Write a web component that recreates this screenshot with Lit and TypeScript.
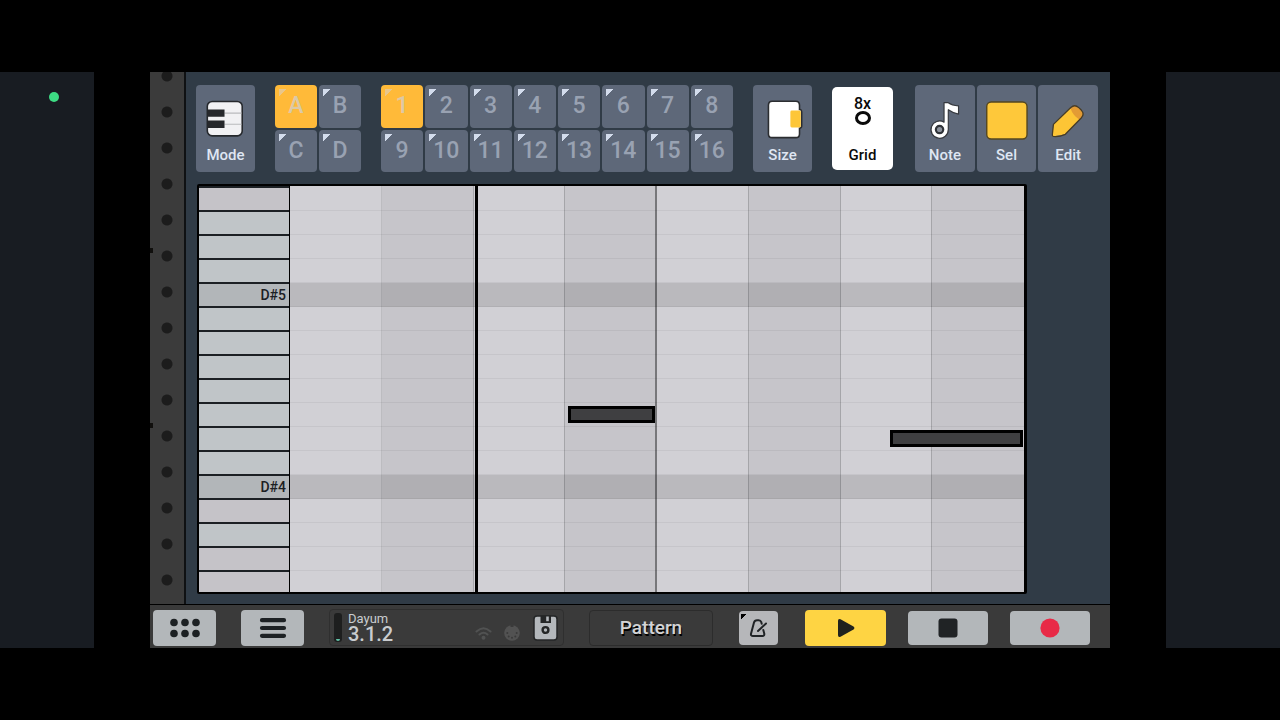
import { LitElement, html, css, svg } from "lit";
import { customElement, state } from "lit/decorators.js";
import { classMap } from "lit/directives/class-map.js";

const BANKS = ["A", "B", "C", "D"];
const PATTERNS = Array.from({ length: 16 }, (_, i) => i + 1);

type Key = { label?: string; warm?: boolean };
const KEYS: Key[] = [
  { warm: true }, {}, {}, {}, { label: "D#5" }, {}, {}, {}, {}, {}, {}, {},
  { label: "D#4" }, { warm: true }, {}, { warm: true }, { warm: true },
];

const LANE = 24;
const NOTES = [
  { start: 37.9, length: 11.8, lane: 9 },
  { start: 81.8, length: 18.1, lane: 10 },
];

const icons = {
  mode: svg`
    <rect x="11.5" y="4.5" width="35.5" height="35" rx="5" fill="#f1f1f3" stroke="#25282c" stroke-width="1.6"/>
    <path d="M29 16.4H46.2M29 27.7H46.2" stroke="#b9babd" stroke-width="1.2"/>
    <path d="M12 12.7H29V20H12ZM12 24H29V31.4H12Z" fill="#26282b"/>`,
  size: svg`
    <path d="M19.5 4.3H43.5Q47.3 4.3 47.3 8.5V12.8H48Q49.5 13.2 49.5 15V29.5Q49.5 31.5 47.3 31.8V37.5Q47.3 41.3 43.5 41.3H19.5Q15.7 41.3 15.7 37.5V8.5Q15.7 4.3 19.5 4.3Z" fill="#fff" stroke="#2b2d30" stroke-width="1.6"/>
    <rect x="38" y="13.7" width="10.6" height="17.3" rx="1.5" fill="#fdc638"/>`,
  note: svg`
    <path d="M29.2 5.7H33.5Q37 8.2 43.8 9V17.3Q38 16 33.5 12.8V32.7A8.7 8.7 0 1 1 29.2 25.3Z" fill="#fff" stroke="#36393f" stroke-width="1.2" stroke-linejoin="round"/>
    <circle cx="24.7" cy="32.7" r="3.7" fill="#8b919b" stroke="#303338" stroke-width="2.2"/>`,
  select: svg`<rect x="9.8" y="5" width="40.500" height="37.2" rx="4.5" fill="#fec83a" stroke="#54461f" stroke-width="1.4"/>`,
  edit: svg`
    <path d="M15.5 27.5L33 10.5Q37 7 41 10.7L43.7 13.4Q47 17 43.7 20.8L27.5 37.500L14.6 39.6Z" fill="#fdc535"/>
    <path d="M32.500 11L33 10.5Q37 7 41 10.7L43.7 13.4Q47 17 43.7 20.8L41.8 22.8Q35 18.5 32.5 11Z" fill="#e39b34"/>
    <path d="M15.5 27.5L33 10.5Q37 7 41 10.7L43.7 13.4Q47 17 43.7 20.8L27.5 37.5Q21 40.400 15.5 39.7Q14.2 39.4 14.4 38Z" fill="none" stroke="#463c28" stroke-width="1.3" stroke-linejoin="round"/>`,
};

@customElement("app-root")
export class AppRoot extends LitElement {
  @state() private bank = "A";
  @state() private pattern = 1;

  static styles = css`
    :host {
      display: block;
      font-family: Roboto, "Liberation Sans", sans-serif;
      color: #dfe6f3;
    }
    * { box-sizing: border-box; }
    button {
      font: inherit;
      color: inherit;
      border: 0;
      margin: 0;
      padding: 0;
      cursor: pointer;
    }
    svg { display: block; }

    .screen {
      min-height: 100vh;
      display: grid;
      grid-template-columns: minmax(0, 94fr) minmax(0, 960fr) minmax(0, 114fr);
      gap: 56px;
      padding: 72px 0;
      background: #000;
    }
    .side { background: #181c22; }
    .side.left { padding: 20px 0 0 49px; }
    .status-dot {
      width: 10px;
      height: 10px;
      border-radius: 50%;
      background: #3ddc84;
    }
    .device { display: flex; flex-direction: column; }
    .main { flex: 1; display: flex; min-height: 0; }

    .rail {
      position: relative;
      flex: none;
      width: 36px;
      border-right: 2px solid #0f1113;
      background:
        radial-gradient(circle, #1c1c1c 5px, transparent 6px) 0 -14px / 34px 36px repeat-y,
        #3b3b3b;
    }
    .nick {
      position: absolute;
      left: 0;
      width: 3px;
      height: 5px;
      background: #100f0d;
    }
    .nick.upper { top: 33%; }
    .nick.lower { top: 66%; }

    .panel {
      flex: 1;
      min-width: 0;
      display: flex;
      flex-direction: column;
      padding: 13px 12px 10px 10px;
      gap: 12px;
      background: #303b46;
    }
    .toolbar { display: flex; gap: 20px; align-items: center; height: 87px; }

    .tool {
      display: flex;
      flex-direction: column;
      align-items: center;
      gap: 4px;
      width: 59px;
      height: 87px;
      padding-top: 12px;
      border-radius: 4px;
      background: #5e6879;
      font-size: 15px;
      font-weight: 500;
      line-height: 16px;
    }
    .tool svg { width: 100%; height: 46px; overflow: visible; }
    .tool.grid-size {
      width: 61px;
      height: 83px;
      margin-right: 2px;
      padding-top: 10px;
      gap: 0;
      border-radius: 5px;
      background: #fff;
      color: #0a0a0a;
    }
    .grid-value { font-size: 16px; line-height: 14px; }
    .ring {
      width: 16px;
      height: 14px;
      border: 3px solid #0a0a0a;
      border-radius: 50%;
      margin-bottom: 22px;
    }
    .tools { display: grid; grid-template-columns: repeat(3, 1fr); gap: 2px; width: 183px; }
    .tools .tool { width: 100%; }

    .pads { display: grid; gap: 2px; height: 100%; }
    .banks { grid-template-columns: repeat(2, 42px); }
    .patterns { flex: 1; grid-template-columns: repeat(8, 1fr); }
    .pad {
      border-radius: 4px;
      font-size: 23px;
      font-weight: 500;
      line-height: 24px;
      color: #99a2b2;
      background:
        linear-gradient(135deg, #d3dcec 50%, transparent 50%) 4px 4px / 7px 7px no-repeat,
        #5e6879;
    }
    .pad.active {
      color: #dcc9a6;
      background:
        linear-gradient(135deg, #e9c68a 50%, transparent 50%) 4px 4px / 7px 7px no-repeat,
        #ffba39;
    }

    .roll {
      flex: 1;
      display: flex;
      min-height: 0;
      margin: 0 71px 0 1px;
      border: 2px solid #000;
      border-right-width: 3px;
      border-radius: 2px;
      overflow: hidden;
      background: #d1d0d5;
    }
    .keys {
      flex: none;
      width: 91px;
      height: 406px;
      overflow: hidden;
      border-right: 1px solid #000;
    }
    .key {
      display: block;
      width: 100%;
      height: 24px;
      padding-right: 3px;
      border-top: 2px solid #1c2024;
      background: #c0c5c8;
      color: #1c2024;
      font-size: 14px;
      font-weight: 500;
      line-height: 22px;
      text-align: right;
    }
    .key.warm { background: #c5c3c8; }
    .key.octave { background: #b2b6b9; }
    .canvas { position: relative; flex: 1; height: 406px; display: grid; overflow: hidden; }
    .beats, .lanes { grid-area: 1 / 1; }
    .beats { display: grid; grid-template-columns: repeat(8, 1fr); }
    .beat { background: #d1d0d5; border-right: 1px solid #a5a5a9; }
    .beat:nth-child(even) { background: #c6c5ca; }
    .beat:first-child { border-color: #bcbcc0; }
    .beat:nth-child(4) { border-right: 2px solid #77777a; }
    .beat:last-child { border: 0; }
    .lanes { position: relative; padding-top: 1px; }
    .lane { height: 24px; border-bottom: 1px solid rgba(0, 0, 0, 0.05); }
    .lane.octave { background: rgba(0, 0, 0, 0.11); }
    .playhead {
      position: absolute;
      top: 0;
      bottom: 0;
      left: 25.2%;
      width: 3px;
      background: #000;
    }
    .note {
      position: absolute;
      height: 17px;
      border: 3px solid #000;
      background: #3f3f41;
    }

    .transport {
      display: flex;
      align-items: center;
      height: 44px;
      padding: 2px 20px 0 3px;
      border-top: 1px solid #000;
      background: #3a3a3a;
    }
    .key-button {
      display: grid;
      place-items: center;
      border-radius: 4px;
      background: #b3b7ba;
    }
    .nav { width: 63px; height: 36px; margin-right: 25px; }
    .control { width: 80px; height: 34px; margin-left: 22px; }
    .control.play { width: 81px; height: 36px; margin-left: 27px; background: #fed443; }
    .metronome {
      width: 39px;
      height: 34px;
      margin-left: 26px;
      background:
        linear-gradient(135deg, #000 50%, transparent 50%) 2px 3px / 6px 6px no-repeat,
        #b6b7ba;
    }
    .status {
      flex: 1;
      display: flex;
      align-items: center;
      height: 37px;
      padding: 0 5px 0 4px;
      border: 1px solid #2f2f2f;
      border-radius: 4px;
      color: #c9cccf;
    }
    .meter {
      display: flex;
      align-items: flex-end;
      justify-content: center;
      width: 8px;
      height: 29px;
      margin-right: 6px;
      padding-bottom: 1px;
      border-radius: 3px;
      background: #1d1e1e;
    }
    .level { width: 4px; height: 2px; border-radius: 0 0 2px 2px; background: #62c5a8; }
    .song { flex: 1; display: flex; flex-direction: column; }
    .song-name { font-size: 13px; line-height: 14px; }
    .position { font-size: 20px; font-weight: 500; line-height: 17px; }
    .indicators { display: flex; gap: 12px; padding: 10px 13px 0 0; }
    .save { background: none; }
    .view {
      width: 124px;
      height: 36px;
      margin-left: 25px;
      border: 1px solid #2c2c2c;
      border-radius: 4px;
      background: none;
      color: #d3d4d6;
      font-size: 19px;
      font-weight: 500;
      text-shadow: 1px 2px 0 #000;
    }
  `;

  private tool(label: string, icon: unknown) {
    return html`<button class="tool">
      <svg viewBox="0 0 60 46" preserveAspectRatio="xMinYMin meet" aria-hidden="true">${icon}</svg>
      <span>${label}</span>
    </button>`;
  }

  private pad(label: string | number, active: boolean, pick: () => void) {
    return html`<button class=${classMap({ pad: true, active })} @click=${pick}>${label}</button>`;
  }

  private renderToolbar() {
    return html`<div class="toolbar">
      ${this.tool("Mode", icons.mode)}
      <div class="pads banks">
        ${BANKS.map((b) => this.pad(b, b === this.bank, () => (this.bank = b)))}
      </div>
      <div class="pads patterns">
        ${PATTERNS.map((p) => this.pad(p, p === this.pattern, () => (this.pattern = p)))}
      </div>
      ${this.tool("Size", icons.size)}
      <button class="tool grid-size">
        <span class="grid-value">8x</span>
        <span class="ring"></span>
        <span>Grid</span>
      </button>
      <div class="tools">
        ${this.tool("Note", icons.note)} ${this.tool("Sel", icons.select)} ${this.tool("Edit", icons.edit)}
      </div>
    </div>`;
  }

  private renderRoll() {
    return html`<div class="roll">
      <div class="keys">
        ${KEYS.map(
          (k, i) => html`<button
            class=${classMap({ key: true, warm: !!k.warm, octave: !!k.label })}
            aria-label=${k.label ?? `Key ${i + 1}`}
          >${k.label ?? ""}</button>`
        )}
      </div>
      <div class="canvas">
        <div class="beats">${Array.from({ length: 8 }, () => html`<div class="beat"></div>`)}</div>
        <div class="lanes">
          ${KEYS.map((k) => html`<div class=${classMap({ lane: true, octave: !!k.label })}></div>`)}
        </div>
        <div class="playhead"></div>
        ${NOTES.map(
          (n) => html`<div
            class="note"
            style="left:${n.start}%;width:${n.length}%;top:${n.lane * LANE + 4}px"
          ></div>`
        )}
      </div>
    </div>`;
  }

  private renderTransport() {
    return html`<div class="transport">
      <button class="key-button nav" aria-label="Modules">
        <svg width="32" height="20" viewBox="0 0 32 20" fill="#1d2124">
          <circle cx="5" cy="4.5" r="3.8"/><circle cx="16" cy="4.5" r="3.8"/><circle cx="27" cy="4.5" r="3.8"/>
          <circle cx="5" cy="15.5" r="3.8"/><circle cx="16" cy="15.5" r="3.8"/><circle cx="27" cy="15.5" r="3.8"/>
        </svg>
      </button>
      <button class="key-button nav" aria-label="Menu">
        <svg width="28" height="20" viewBox="0 0 28 20" stroke="#1d2124" stroke-width="4.2" stroke-linecap="round">
          <path d="M3 2.2H25M3 10H25M3 17.8H25"/>
        </svg>
      </button>
      <div class="status">
        <div class="meter"><div class="level"></div></div>
        <div class="song">
          <span class="song-name">Dayum</span>
          <span class="position">3.1.2</span>
        </div>
        <div class="indicators">
          <svg width="17" height="16" viewBox="0 0 17 16" fill="none" stroke="#515252" stroke-width="2" stroke-linecap="round">
            <path d="M1.5 6.5Q8.5 0 15.5 6.5M4.5 9.5Q8.5 6 12.5 9.5"/><circle cx="8.5" cy="12.8" r="1" fill="#515252"/>
          </svg>
          <svg width="16" height="16" viewBox="0 0 16 16">
            <circle cx="8" cy="8" r="7.8" fill="#525252"/>
            <g fill="#3a3a3a"><circle cx="3.3" cy="8" r="1"/><circle cx="12.7" cy="8" r="1"/><circle cx="4.7" cy="11.5" r="1"/><circle cx="11.3" cy="11.5" r="1"/><circle cx="8" cy="12.8" r="1"/><path d="M6.5 0H9.5V2H6.5Z"/></g>
          </svg>
        </div>
        <button class="save" aria-label="Save">
          <svg width="25" height="26" viewBox="0 0 25 26">
            <rect x="1" y="1" width="23" height="24" rx="3" fill="#b4b8bc" stroke="#242627" stroke-width="1.5"/>
            <path d="M7.5 0.5H18V8H7.5Z" fill="#242627"/><path d="M13.2 1.5H15.8V6.2H13.2Z" fill="#b4b8bc"/>
            <circle cx="12.5" cy="15" r="2.9" fill="#b4b8bc" stroke="#242627" stroke-width="2.4"/>
          </svg>
        </button>
      </div>
      <button class="view">Pattern</button>
      <button class="key-button metronome" aria-label="Metronome">
        <svg width="19" height="20" viewBox="0 0 19 20" fill="none" stroke="#202326" stroke-width="2" stroke-linecap="round" stroke-linejoin="round">
          <path d="M14.3 12L15.3 15.8Q15.5 18 13.5 18H4Q1.6 18 2 15.8L5 4.5Q5.6 2.2 8 2.2H9.7Q11.6 2.2 12.3 4.2L12.7 5.8M9 13L17 5.5"/>
        </svg>
      </button>
      <button class="key-button control play" aria-label="Play">
        <svg width="18" height="20" viewBox="0 0 18 20" fill="#20221d"><path d="M1 3Q1 0.3 3.5 1.3L16.5 8.5Q18.3 10 16.5 11.5L3.5 18.8Q1 19.8 1 17Z"/></svg>
      </button>
      <button class="key-button control" aria-label="Stop">
        <svg width="20" height="20" viewBox="0 0 20 20"><rect x="0.5" y="0.5" width="19" height="19" rx="3" fill="#202325"/></svg>
      </button>
      <button class="key-button control" aria-label="Record">
        <svg width="20" height="20" viewBox="0 0 20 20"><circle cx="10" cy="10" r="9.6" fill="#e82a47"/></svg>
      </button>
    </div>`;
  }

  render() {
    return html`<div class="screen">
      <div class="side left"><div class="status-dot"></div></div>
      <div class="device">
        <div class="main">
          <div class="rail"><span class="nick upper"></span><span class="nick lower"></span></div>
          <div class="panel">${this.renderToolbar()} ${this.renderRoll()}</div>
        </div>
        ${this.renderTransport()}
      </div>
      <div class="side right"></div>
    </div>`;
  }
}
